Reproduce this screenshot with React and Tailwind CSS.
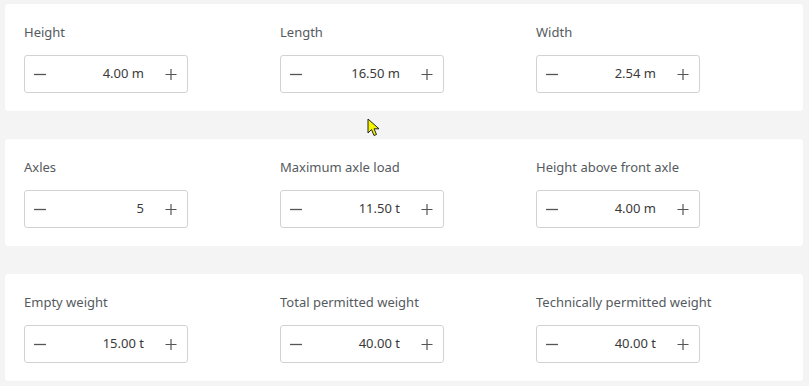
import React from "react";

const rows = [
  [
    { label: "Height", value: "4.00 m" },
    { label: "Length", value: "16.50 m" },
    { label: "Width", value: "2.54 m" },
  ],
  [
    { label: "Axles", value: "5" },
    { label: "Maximum axle load", value: "11.50 t" },
    { label: "Height above front axle", value: "4.00 m" },
  ],
  [
    { label: "Empty weight", value: "15.00 t" },
    { label: "Total permitted weight", value: "40.00 t" },
    { label: "Technically permitted weight", value: "40.00 t" },
  ],
];

function Stepper({ value }) {
  return (
    <div className="flex h-[38px] w-[164px] items-center rounded-[3px] border border-[#d2d2d2] bg-white">
      <button className="flex h-full w-[28px] items-center justify-center pl-[1px]">
        <svg width="12" height="12" viewBox="0 0 12 12">
          <path d="M0 6.5H12" stroke="#555" strokeWidth="1.3" />
        </svg>
      </button>
      <div className="flex-1 pr-[12px] text-right text-[13px] text-[#3a3a3a]">{value}</div>
      <button className="flex h-full w-[31px] items-center justify-center pr-[2px]">
        <svg width="12" height="12" viewBox="0 0 12 12">
          <path d="M0.5 6.5H11.5M6 1V12" stroke="#555" strokeWidth="1.2" />
        </svg>
      </button>
    </div>
  );
}

export default function App() {
  return (
    <div
      className="relative h-[386px] w-[809px] overflow-hidden bg-[#f4f4f4] pl-[5px] pt-[4px]"
      style={{ fontFamily: '"Noto Sans", "Open Sans", sans-serif' }}
    >
      <div className="flex w-[798px] flex-col gap-[28px]">
        {rows.map((row, i) => (
          <div
            key={i}
            className="grid h-[107px] grid-cols-[256px_256px_256px] rounded-[3px] bg-white pl-[19px] pt-[19px] shadow-[0_0_1px_rgba(0,0,0,0.04)]"
          >
            {row.map((f) => (
              <div key={f.label} className="flex flex-col">
                <div className="h-[18px] text-[13px] leading-[18px] text-[#555a60]">{f.label}</div>
                <div className="mt-[14px]">
                  <Stepper value={f.value} />
                </div>
              </div>
            ))}
          </div>
        ))}
      </div>
      <svg
        className="absolute left-[367px] top-[118px]"
        width="14"
        height="20"
        viewBox="0 0 14 20"
      >
        <path
          d="M1 1 L1 15 L4.5 11.5 L7 17.5 L9.5 16.5 L7 10.8 L12 10.8 Z"
          fill="#f5f500"
          stroke="#222"
          strokeWidth="1"
          strokeLinejoin="round"
        />
      </svg>
    </div>
  );
}
